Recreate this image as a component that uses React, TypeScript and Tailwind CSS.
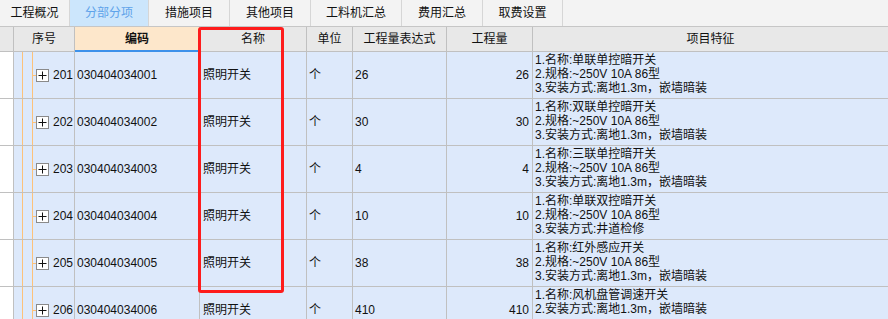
import React from 'react';

const tabs = ['工程概况', '分部分项', '措施项目', '其他项目', '工料机汇总', '费用汇总', '取费设置'];
const tabWidths = ['w-[70px]', 'w-[79px]', 'w-[81px]', 'w-[81px]', 'w-[91px]', 'w-[81px]', 'w-[80px]'];

const rows = [
  { no: 201, code: '030404034001', qty: '26', feat: ['1.名称:单联单控暗开关', '2.规格:~250V 10A 86型', '3.安装方式:离地1.3m，嵌墙暗装'] },
  { no: 202, code: '030404034002', qty: '30', feat: ['1.名称:双联单控暗开关', '2.规格:~250V 10A 86型', '3.安装方式:离地1.3m，嵌墙暗装'] },
  { no: 203, code: '030404034003', qty: '4', feat: ['1.名称:三联单控暗开关', '2.规格:~250V 10A 86型', '3.安装方式:离地1.3m，嵌墙暗装'] },
  { no: 204, code: '030404034004', qty: '10', feat: ['1.名称:单联双控暗开关', '2.规格:~250V 10A 86型', '3.安装方式:井道检修'] },
  { no: 205, code: '030404034005', qty: '38', feat: ['1.名称:红外感应开关', '2.规格:~250V 10A 86型', '3.安装方式:离地1.3m，嵌墙暗装'] },
  { no: 206, code: '030404034006', qty: '410', feat: ['1.名称:风机盘管调速开关', '2.安装方式:离地1.3m，嵌墙暗装'] },
];

const cols = 'grid grid-cols-[14px_61px_125px_107px_46px_94px_86px_1fr]';

function PlusBox() {
  return (
    <div className="flex h-[13px] w-[13px] items-center justify-center border border-[#8a8a8a] bg-white">
      <svg width="9" height="9" viewBox="0 0 9 9">
        <path d="M0.5 4.5h8M4.5 0.5v8" stroke="#111" strokeWidth="1" />
      </svg>
    </div>
  );
}

export default function App() {
  return (
    <div className="relative h-[319px] w-[888px] overflow-hidden bg-white font-['Liberation_Sans','Noto_Sans_CJK_SC',sans-serif] text-[12px] text-[#111]">
      {/* tab strip */}
      <div className="flex h-[27px] border-b border-[#c6c6c6] bg-[#f3f3f3]">
        {tabs.map((t, i) => (
          <div
            key={t}
            className={`flex h-full items-center justify-center border-r border-[#d6d6d6] ${tabWidths[i]} ${i === 1 ? 'bg-[#cce6fc] text-[#5ea3ea]' : ''}`}
          >
            {t}
          </div>
        ))}
      </div>

      {/* header */}
      <div className={`${cols} h-[25px] bg-[#e8e8e8]`}>
        <div className="border-r border-b border-[#c0c0c0]" />
        <div className="flex items-center justify-center border-r border-b border-[#c0c0c0]">序号</div>
        <div className="flex items-center justify-center border-r border-b-2 border-[#c0c0c0] border-b-[#3d91ea] bg-[#fde7cb] font-bold">编码</div>
        <div className="flex items-center justify-center border-r border-b border-[#c0c0c0]">名称</div>
        <div className="flex items-center justify-center border-r border-b border-[#c0c0c0]">单位</div>
        <div className="flex items-center justify-center border-r border-b border-[#c0c0c0]">工程量表达式</div>
        <div className="flex items-center justify-center border-r border-b border-[#c0c0c0]">工程量</div>
        <div className="flex items-center justify-center border-b border-[#c0c0c0]">项目特征</div>
      </div>

      {/* rows */}
      {rows.map((r) => (
        <div key={r.no} className={`${cols} h-[47px]`}>
          <div className="border-r border-b border-[#c0c0c0] bg-white" />
          <div className="flex h-full border-r border-b border-[#c0c0c0] bg-[#dde9fb]">
            <div className="ml-[8px] h-full w-[10px] border-l border-[#fdc27a]" />
            <div className="flex h-full items-center border-l border-[#fdc27a]">
              <div className="h-px w-[3px] bg-[#fdc27a]" />
            </div>
            <div className="flex items-center">
              <PlusBox />
              <span className="ml-[4px]">{r.no}</span>
            </div>
          </div>
          <div className="flex items-center border-r border-b border-[#c0c0c0] bg-[#dde9fb] pl-[2px]">{r.code}</div>
          <div className="flex items-center border-r border-b border-[#c0c0c0] bg-[#dde9fb] pl-[3px]">照明开关</div>
          <div className="flex items-center border-r border-b border-[#c0c0c0] bg-[#dde9fb] pl-[2px]">个</div>
          <div className="flex items-center border-r border-b border-[#c0c0c0] bg-[#dde9fb] pl-[2px]">{r.qty}</div>
          <div className="flex items-center justify-end border-r border-b border-[#c0c0c0] bg-[#dde9fb] pr-[3px]">{r.qty}</div>
          <div className="border-b border-[#c0c0c0] bg-[#dde9fb] pt-px pl-[2px] leading-[14px]">
            {r.feat.map((f) => (
              <div key={f}>{f}</div>
            ))}
          </div>
        </div>
      ))}

      {/* red highlight around 名称 column */}
      <div className="pointer-events-none absolute top-[27px] left-[198px] h-[266px] w-[86px] rounded-[3px] border-[3px] border-[#fe1c1c]" />
    </div>
  );
}
